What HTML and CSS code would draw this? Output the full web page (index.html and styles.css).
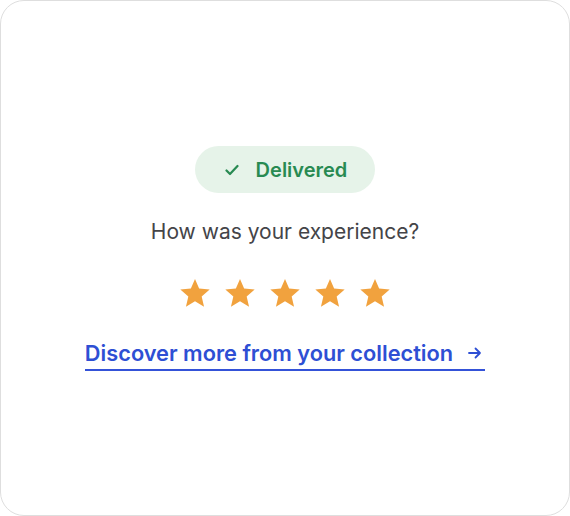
FILE: index.html
```html
<!DOCTYPE html>
<html lang="en">
<head>
<meta charset="utf-8">
<title>Delivered</title>
<link rel="stylesheet" href="styles.css">
</head>
<body>
<div class="card">
  <div class="content">
    <div class="badge">
      <svg class="check" width="14" height="12" viewBox="0 0 14 12" aria-hidden="true"><path d="M1.5 6.5 L5 10 L12.5 2" fill="none" stroke="currentColor" stroke-width="2.2" stroke-linecap="round" stroke-linejoin="round"/></svg>
      <span>Delivered</span>
    </div>
    <p class="question">How was your experience?</p>
    <div class="stars">
      <svg class="star" viewBox="0 0 24 24"><path d="M12 1.5l3.1 7.2 7.9.7-6 5.2 1.8 7.7L12 18.2 5.2 22.3 7 14.6 1 9.4l7.9-.7z"/></svg>
      <svg class="star" viewBox="0 0 24 24"><path d="M12 1.5l3.1 7.2 7.9.7-6 5.2 1.8 7.7L12 18.2 5.2 22.3 7 14.6 1 9.4l7.9-.7z"/></svg>
      <svg class="star" viewBox="0 0 24 24"><path d="M12 1.5l3.1 7.2 7.9.7-6 5.2 1.8 7.7L12 18.2 5.2 22.3 7 14.6 1 9.4l7.9-.7z"/></svg>
      <svg class="star" viewBox="0 0 24 24"><path d="M12 1.5l3.1 7.2 7.9.7-6 5.2 1.8 7.7L12 18.2 5.2 22.3 7 14.6 1 9.4l7.9-.7z"/></svg>
      <svg class="star" viewBox="0 0 24 24"><path d="M12 1.5l3.1 7.2 7.9.7-6 5.2 1.8 7.7L12 18.2 5.2 22.3 7 14.6 1 9.4l7.9-.7z"/></svg>
    </div>
    <a class="link" href="#">
      <span>Discover more from your collection</span>
      <svg class="arrow" width="14" height="12" viewBox="0 0 14 12" aria-hidden="true"><path d="M1 6 H12 M7.5 1.5 L12 6 L7.5 10.5" fill="none" stroke="currentColor" stroke-width="1.8" stroke-linecap="round" stroke-linejoin="round"/></svg>
    </a>
  </div>
</div>
</body>
</html>
```
FILE: styles.css
```css
html, body {
  margin: 0;
  padding: 0;
  background: #ffffff;
}
body {
  font-family: Inter, "Noto Sans", "Liberation Sans", sans-serif;
}
.card {
  box-sizing: border-box;
  width: 570px;
  height: 516px;
  border: 1px solid #dedede;
  border-radius: 24px;
  background: #ffffff;
  display: flex;
  flex-direction: column;
  align-items: center;
  padding-top: 145px;
}
.content {
  display: flex;
  flex-direction: column;
  align-items: center;
}
.badge {
  display: flex;
  align-items: center;
  gap: 17px;
  height: 47px;
  padding: 0 28px 0 30px;
  border-radius: 24px;
  background: #e6f3e9;
  color: #288a52;
  font-size: 20px;
  font-weight: 600;
}
.check {
  display: block;
}
.question {
  margin: 23px 0 0;
  font-size: 21px;
  line-height: 32px;
  color: #444448;
}
.stars {
  display: flex;
  gap: 13px;
  margin-top: 29px;
}
.star {
  width: 32px;
  height: 32px;
  fill: #f1a23e;
  display: block;
}
.link {
  margin-top: 31px;
  display: flex;
  align-items: center;
  gap: 15px;
  padding: 0 3px 3px 0;
  border-bottom: 2px solid #3452d8;
  color: #2e4fd4;
  text-decoration: none;
  font-size: 21.75px;
  font-weight: 600;
  line-height: 26px;
}
.arrow {
  display: block;
}
```
